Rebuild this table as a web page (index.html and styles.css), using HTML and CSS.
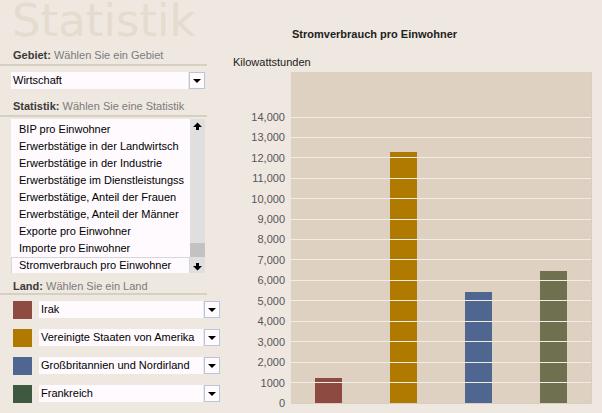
FILE: index.html
```html
<!DOCTYPE html>
<html lang="de">
<head>
<meta charset="utf-8">
<title>Statistik</title>
<link rel="stylesheet" href="styles.css">
</head>
<body>
<div class="app">
  <aside class="side">
    <div class="brand">Statistik</div>
    <div class="label"><b>Gebiet:</b> Wählen Sie ein Gebiet</div>
    <div class="select select-area">
      <span class="val">Wirtschaft</span>
      <span class="btn"><i class="tri"></i></span>
    </div>
    <div class="label label-stat"><b>Statistik:</b> Wählen Sie eine Statistik</div>
    <div class="listbox">
      <ul class="items">
        <li>BIP pro Einwohner</li>
        <li>Erwerbstätige in der Landwirtsch</li>
        <li>Erwerbstätige in der Industrie</li>
        <li>Erwerbstätige im Dienstleistungss</li>
        <li>Erwerbstätige, Anteil der Frauen</li>
        <li>Erwerbstätige, Anteil der Männer</li>
        <li>Exporte pro Einwohner</li>
        <li>Importe pro Einwohner</li>
        <li class="sel">Stromverbrauch pro Einwohner</li>
      </ul>
      <div class="scroll">
        <svg class="arr" width="9" height="9" viewBox="0 0 9 9"><polygon points="4.5,0.5 9,5 6,5 6,8 3,8 3,5 0,5" fill="#000"/></svg>
        <div class="track"><div class="thumb"></div></div>
        <svg class="arr" width="9" height="9" viewBox="0 0 9 9"><polygon points="4.5,8.5 9,4 6,4 6,1 3,1 3,4 0,4" fill="#000"/></svg>
      </div>
    </div>
    <div class="label label-land"><b>Land:</b> Wählen Sie ein Land</div>
    <div class="countries">
      <div class="crow">
        <span class="sw c-irak"></span>
        <div class="select"><span class="val">Irak</span><span class="btn"><i class="tri"></i></span></div>
      </div>
      <div class="crow">
        <span class="sw c-usa"></span>
        <div class="select"><span class="val">Vereinigte Staaten von Amerika</span><span class="btn"><i class="tri"></i></span></div>
      </div>
      <div class="crow">
        <span class="sw c-gb"></span>
        <div class="select"><span class="val">Großbritannien und Nordirland</span><span class="btn"><i class="tri"></i></span></div>
      </div>
      <div class="crow">
        <span class="sw c-fr"></span>
        <div class="select"><span class="val">Frankreich</span><span class="btn"><i class="tri"></i></span></div>
      </div>
    </div>
  </aside>
  <main class="chart">
    <div class="ctitle">Stromverbrauch pro Einwohner</div>
    <div class="unit">Kilowattstunden</div>
    <svg class="plot" width="369" height="341" viewBox="0 0 369 341">
      <rect x="58" y="0" width="300" height="331" fill="#dfd1c1"/>
      <line x1="358.5" y1="0" x2="358.5" y2="331" stroke="#d6d0c4" stroke-width="1"/>
      <line x1="58" y1="331.5" x2="359" y2="331.5" stroke="#d6d0c4" stroke-width="1"/>
      <rect x="82" y="306" width="27" height="25" fill="#8d4a41"/>
      <rect x="157" y="80" width="27" height="251" fill="#b07a00"/>
      <rect x="232" y="220" width="27" height="111" fill="#4f6690"/>
      <rect x="307" y="199" width="27" height="132" fill="#6f7050"/>
      <g stroke="#f1ece4" stroke-width="1">
        <line x1="58" x2="358" y1="310.5" y2="310.5"/>
        <line x1="58" x2="358" y1="290.5" y2="290.5"/>
        <line x1="58" x2="358" y1="269.5" y2="269.5"/>
        <line x1="58" x2="358" y1="249.5" y2="249.5"/>
        <line x1="58" x2="358" y1="228.5" y2="228.5"/>
        <line x1="58" x2="358" y1="208.5" y2="208.5"/>
        <line x1="58" x2="358" y1="187.5" y2="187.5"/>
        <line x1="58" x2="358" y1="167.5" y2="167.5"/>
        <line x1="58" x2="358" y1="147.5" y2="147.5"/>
        <line x1="58" x2="358" y1="126.5" y2="126.5"/>
        <line x1="58" x2="358" y1="106.5" y2="106.5"/>
        <line x1="58" x2="358" y1="85.5" y2="85.5"/>
        <line x1="58" x2="358" y1="65.5" y2="65.5"/>
        <line x1="58" x2="358" y1="45.5" y2="45.5"/>
      </g>
      <g class="ax" text-anchor="end">
        <text x="52" y="335">0</text>
        <text x="52" y="315">1000</text>
        <text x="52" y="294">2,000</text>
        <text x="52" y="274">3,000</text>
        <text x="52" y="253">4,000</text>
        <text x="52" y="233">5,000</text>
        <text x="52" y="212">6,000</text>
        <text x="52" y="192">7,000</text>
        <text x="52" y="171">8,000</text>
        <text x="52" y="151">9,000</text>
        <text x="52" y="131">10,000</text>
        <text x="52" y="110">11,000</text>
        <text x="52" y="90">12,000</text>
        <text x="52" y="69">13,000</text>
        <text x="52" y="49">14,000</text>
      </g>
    </svg>
  </main>
</div>
</body>
</html>
```

FILE: styles.css
```css
* { box-sizing: border-box; }
html, body {
  margin: 0;
  padding: 0;
  background: #eee8e0;
  width: 602px;
  height: 413px;
  overflow: hidden;
  font-family: "Liberation Sans", Arial, sans-serif;
  font-size: 11px;
  color: #000;
}
.app {
  display: flex;
  width: 602px;
  height: 413px;
}
.side {
  width: 220px;
  flex: none;
  display: flex;
  flex-direction: column;
}
.brand {
  height: 47px;
  overflow: hidden;
  font-family: "DejaVu Sans", sans-serif;
  font-size: 45px;
  line-height: 42px;
  color: #e5dbcf;
  padding-left: 12px;
}
.label {
  width: 207px;
  padding-left: 13px;
  line-height: 14px;
  padding-bottom: 2px;
  border-bottom: 2px solid #d6d0c3;
  color: #7b7b7b;
  margin-top: 1px;
  white-space: nowrap;
}
.label b {
  color: #3a3a3a;
}
.label-stat { margin-top: 10px; }
.label-land { margin-top: 6px; padding-bottom: 0; }

.select {
  display: flex;
  height: 17px;
}
.select .val {
  flex: 1;
  background: #fefafe;
  line-height: 17px;
  padding-left: 2px;
  white-space: nowrap;
  overflow: hidden;
}
.select .btn {
  width: 16px;
  flex: none;
  background: #fefafe;
  border: 1px solid #b7c6da;
  display: flex;
  align-items: center;
  justify-content: center;
  margin-left: 1px;
}
.tri {
  width: 0;
  height: 0;
  border-left: 4px solid transparent;
  border-right: 4px solid transparent;
  border-top: 4px solid #000;
}
.select-area {
  margin: 6px 15px 0 11px;
}

.listbox {
  display: flex;
  margin: 2px 15px 0 11px;
  height: 154px;
}
.items {
  list-style: none;
  margin: 0;
  padding: 2px 0 0 0;
  flex: 1;
  min-width: 0;
  background: #fefafe;
  overflow: hidden;
}
.items li {
  height: 17px;
  line-height: 17px;
  padding-left: 8px;
  white-space: nowrap;
}
.items li.sel {
  border: 1px solid #d9d5dd;
  line-height: 15px;
  padding-left: 7px;
}
.scroll {
  width: 15px;
  flex: none;
  background: #dfdfdf;
  display: flex;
  flex-direction: column;
  align-items: center;
  padding: 3px 0 2px;
}
.arr { flex: none; display: block; }
.track {
  flex: 1;
  width: 100%;
  display: flex;
  flex-direction: column;
  justify-content: flex-end;
  padding-bottom: 5px;
}
.thumb {
  height: 14px;
  background: #c2c2c2;
}

.countries {
  display: flex;
  flex-direction: column;
  gap: 10px;
  margin-top: 6px;
}
.crow {
  display: flex;
  align-items: flex-start;
  padding-left: 13px;
}
.sw {
  width: 19px;
  height: 18px;
  flex: none;
  margin-right: 7px;
}
.crow .select { flex: 1; }
.c-irak { background: #8f4a42; }
.c-usa { background: #b07a00; }
.c-gb { background: #4f6690; }
.c-fr { background: #3f5840; }

.chart {
  flex: 1;
  display: flex;
  flex-direction: column;
}
.ctitle {
  margin-top: 27px;
  padding-left: 72px;
  font-weight: bold;
  line-height: 14px;
  color: #222;
}
.unit {
  margin-top: 14px;
  padding-left: 13px;
  line-height: 14px;
  color: #222;
}
.plot {
  display: block;
  margin-top: 3px;
  margin-left: 13px;
}
.ax text {
  font-family: "Liberation Sans", Arial, sans-serif;
  font-size: 11px;
  fill: #58545c;
}
```
